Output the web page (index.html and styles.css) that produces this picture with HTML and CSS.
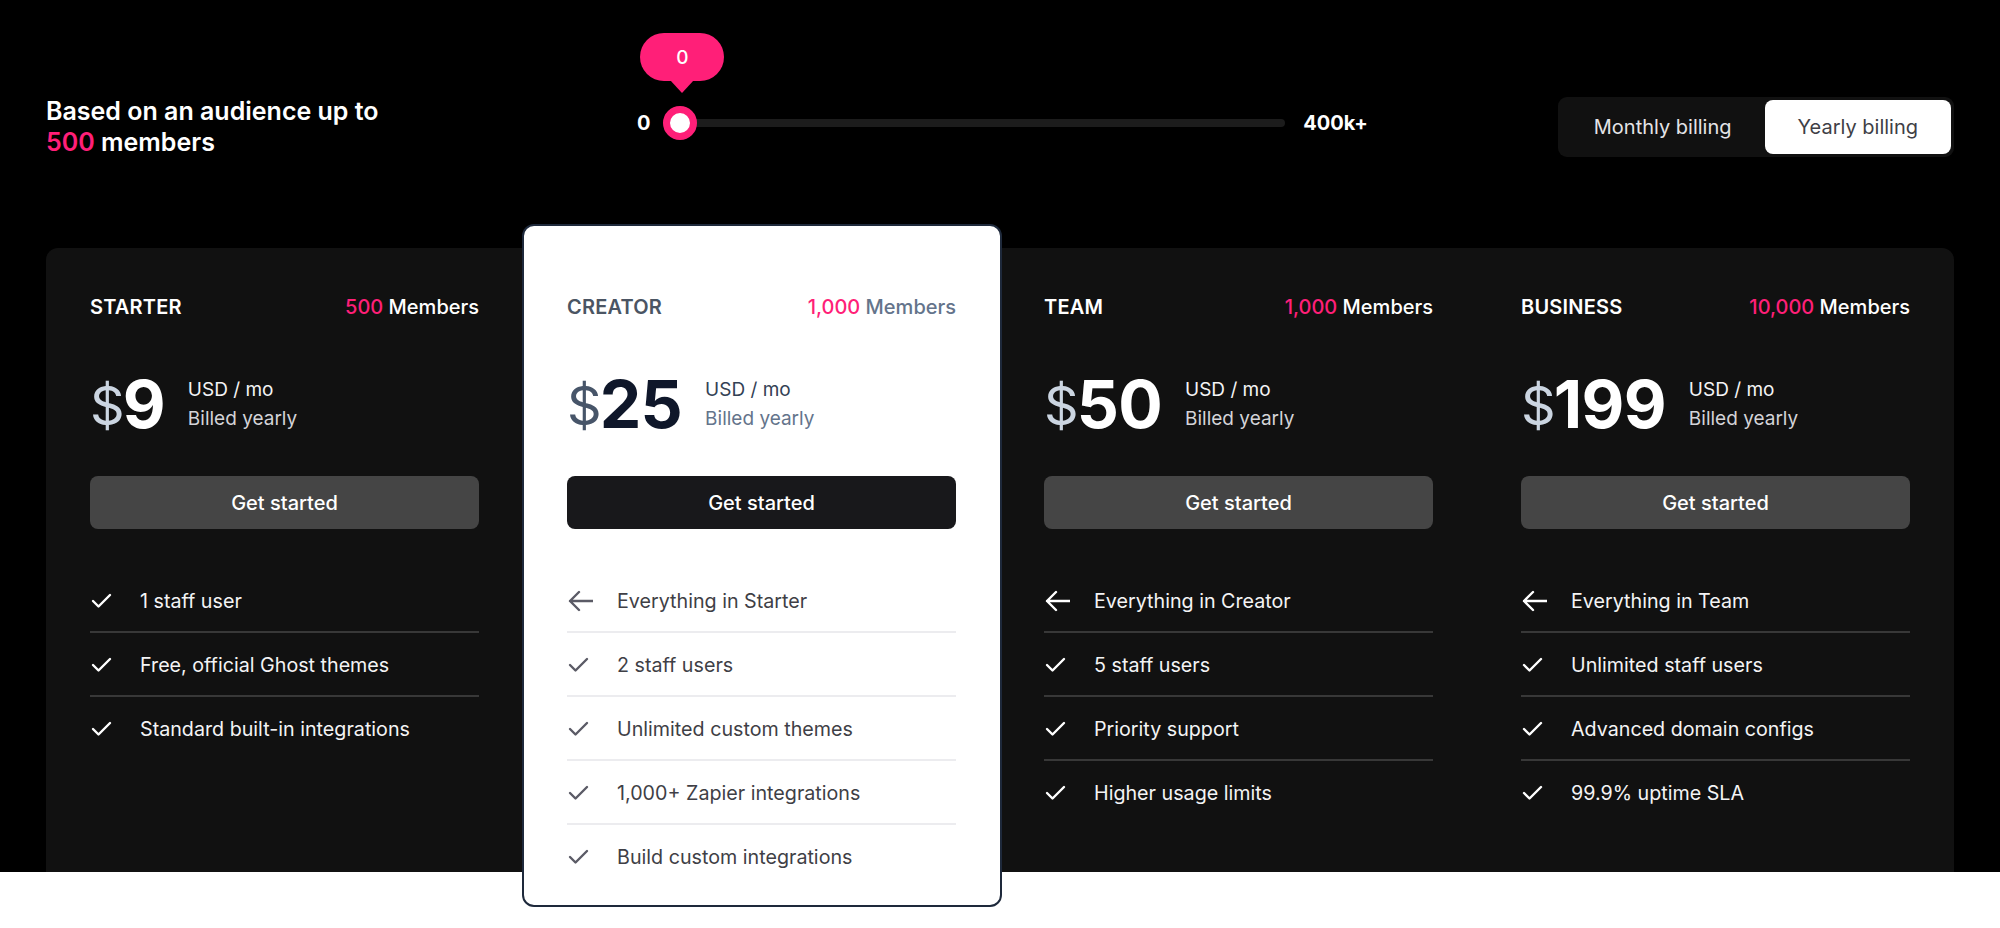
FILE: index.html
```html
<!DOCTYPE html>
<html lang="en">
<head>
<meta charset="utf-8">
<title>Pricing</title>
<link rel="stylesheet" href="styles.css">
</head>
<body>
<section class="pricing">
  <div class="topbar">
    <h2 class="audience">Based on an audience up to<br><span class="pink">500</span> members</h2>
    <div class="slider">
      <span class="slider-label">0</span>
      <div class="track">
        <div class="tooltip">0</div>
        <div class="handle"></div>
      </div>
      <span class="slider-label end">400k+</span>
    </div>
    <div class="billing">
      <button class="billing-opt">Monthly billing</button>
      <button class="billing-opt active">Yearly billing</button>
    </div>
  </div>

  <div class="plans">
    <div class="plan">
      <div class="plan-head"><span class="plan-name">STARTER</span><span class="plan-members"><span class="pink">500</span> Members</span></div>
      <div class="price-row">
        <div class="price"><span class="cur">$</span><span class="amount">9</span></div>
        <div class="unit"><span class="unit-top">USD / mo</span><span class="unit-sub">Billed yearly</span></div>
      </div>
      <button class="cta">Get started</button>
      <ul class="features">
        <li><span class="ficon"><svg viewBox="0 0 26 22" width="26" height="22"><polyline points="3,11 8.5,16.5 20,5" /></svg></span>1 staff user</li>
        <li><span class="ficon"><svg viewBox="0 0 26 22" width="26" height="22"><polyline points="3,11 8.5,16.5 20,5" /></svg></span>Free, official Ghost themes</li>
        <li><span class="ficon"><svg viewBox="0 0 26 22" width="26" height="22"><polyline points="3,11 8.5,16.5 20,5" /></svg></span>Standard built-in integrations</li>
      </ul>
    </div>

    <div class="plan featured">
      <div class="plan-head"><span class="plan-name">CREATOR</span><span class="plan-members"><span class="pink">1,000</span> Members</span></div>
      <div class="price-row">
        <div class="price"><span class="cur">$</span><span class="amount">25</span></div>
        <div class="unit"><span class="unit-top">USD / mo</span><span class="unit-sub">Billed yearly</span></div>
      </div>
      <button class="cta">Get started</button>
      <ul class="features">
        <li><span class="ficon"><svg viewBox="0 0 26 22" width="26" height="22"><path d="M3 11 H26 M12 2 L3 11 L12 20" /></svg></span>Everything in Starter</li>
        <li><span class="ficon"><svg viewBox="0 0 26 22" width="26" height="22"><polyline points="3,11 8.5,16.5 20,5" /></svg></span>2 staff users</li>
        <li><span class="ficon"><svg viewBox="0 0 26 22" width="26" height="22"><polyline points="3,11 8.5,16.5 20,5" /></svg></span>Unlimited custom themes</li>
        <li><span class="ficon"><svg viewBox="0 0 26 22" width="26" height="22"><polyline points="3,11 8.5,16.5 20,5" /></svg></span>1,000+ Zapier integrations</li>
        <li><span class="ficon"><svg viewBox="0 0 26 22" width="26" height="22"><polyline points="3,11 8.5,16.5 20,5" /></svg></span>Build custom integrations</li>
      </ul>
    </div>

    <div class="plan">
      <div class="plan-head"><span class="plan-name">TEAM</span><span class="plan-members"><span class="pink">1,000</span> Members</span></div>
      <div class="price-row">
        <div class="price"><span class="cur">$</span><span class="amount">50</span></div>
        <div class="unit"><span class="unit-top">USD / mo</span><span class="unit-sub">Billed yearly</span></div>
      </div>
      <button class="cta">Get started</button>
      <ul class="features">
        <li><span class="ficon"><svg viewBox="0 0 26 22" width="26" height="22"><path d="M3 11 H26 M12 2 L3 11 L12 20" /></svg></span>Everything in Creator</li>
        <li><span class="ficon"><svg viewBox="0 0 26 22" width="26" height="22"><polyline points="3,11 8.5,16.5 20,5" /></svg></span>5 staff users</li>
        <li><span class="ficon"><svg viewBox="0 0 26 22" width="26" height="22"><polyline points="3,11 8.5,16.5 20,5" /></svg></span>Priority support</li>
        <li><span class="ficon"><svg viewBox="0 0 26 22" width="26" height="22"><polyline points="3,11 8.5,16.5 20,5" /></svg></span>Higher usage limits</li>
      </ul>
    </div>

    <div class="plan">
      <div class="plan-head"><span class="plan-name">BUSINESS</span><span class="plan-members"><span class="pink">10,000</span> Members</span></div>
      <div class="price-row">
        <div class="price"><span class="cur">$</span><span class="amount">199</span></div>
        <div class="unit"><span class="unit-top">USD / mo</span><span class="unit-sub">Billed yearly</span></div>
      </div>
      <button class="cta">Get started</button>
      <ul class="features">
        <li><span class="ficon"><svg viewBox="0 0 26 22" width="26" height="22"><path d="M3 11 H26 M12 2 L3 11 L12 20" /></svg></span>Everything in Team</li>
        <li><span class="ficon"><svg viewBox="0 0 26 22" width="26" height="22"><polyline points="3,11 8.5,16.5 20,5" /></svg></span>Unlimited staff users</li>
        <li><span class="ficon"><svg viewBox="0 0 26 22" width="26" height="22"><polyline points="3,11 8.5,16.5 20,5" /></svg></span>Advanced domain configs</li>
        <li><span class="ficon"><svg viewBox="0 0 26 22" width="26" height="22"><polyline points="3,11 8.5,16.5 20,5" /></svg></span>99.9% uptime SLA</li>
      </ul>
    </div>
  </div>
</section>
</body>
</html>
```

FILE: styles.css
```css
* { box-sizing: border-box; }

html { background: #ffffff; }

body {
  margin: 0;
  padding-bottom: 58px;
  background: #ffffff;
  font-family: Inter, "Noto Sans", "Liberation Sans", sans-serif;
  color: #fff;
}

.pink { color: #ff1f78; }

.pricing {
  background: #000;
  padding: 40px 46px 0;
}

.topbar {
  height: 174px;
  display: flex;
  align-items: center;
  justify-content: space-between;
}

.audience {
  width: 401px;
  margin: 0;
  font-size: 25px;
  line-height: 31px;
  font-weight: 600;
  color: #fff;
}

.slider {
  width: 731px;
  display: flex;
  align-items: center;
  margin-bottom: 8px;
}

.slider-label {
  font-size: 20px;
  font-weight: 700;
  line-height: 24px;
  color: #fff;
}

.track {
  position: relative;
  flex: 1;
  height: 8px;
  margin: 0 18px 0 13px;
  background: #1c1c1c;
  border-radius: 4px;
}

.handle {
  position: absolute;
  left: 0;
  top: -13px;
  width: 34px;
  height: 34px;
  border-radius: 50%;
  background: #fff;
  border: 7px solid #ff1f78;
}

.tooltip {
  position: absolute;
  left: -23px;
  top: -86px;
  width: 84px;
  height: 48px;
  border-radius: 24px;
  background: #ff1f78;
  color: #fff;
  font-size: 19px;
  font-weight: 500;
  display: flex;
  align-items: center;
  justify-content: center;
}

.tooltip::after {
  content: "";
  position: absolute;
  left: 30px;
  bottom: -12px;
  border-left: 12px solid transparent;
  border-right: 12px solid transparent;
  border-top: 13px solid #ff1f78;
}

.billing {
  display: flex;
  padding: 3px;
  background: #111;
  border-radius: 9px;
}

.billing-opt {
  height: 54px;
  padding: 0 33px;
  border: 0;
  background: transparent;
  border-radius: 8px;
  font-family: inherit;
  font-size: 20px;
  color: #e4e4e7;
}

.billing-opt.active {
  background: #fff;
  color: #3f3f46;
}

.plans {
  margin-top: 34px;
  display: grid;
  grid-template-columns: repeat(4, 1fr);
  background: #111;
  border-radius: 12px 12px 0 0;
}

.plan {
  padding: 45px 44px 0;
  min-width: 0;
}

.plan.featured {
  margin: -24px -2px -35px -1px;
  padding: 67px 44px 18px 43px;
  background: #fff;
  border: 2px solid #1e293b;
  border-radius: 12px;
}

.plan-head {
  display: flex;
  justify-content: space-between;
  font-size: 20px;
  line-height: 28px;
  font-weight: 600;
}

.plan-name { letter-spacing: 0.01em; color: #fff; }
.plan-members { font-weight: 500; color: #fff; }
.featured .plan-name { color: #4b5563; }
.featured .plan-members { color: #64748b; }

.price-row {
  margin-top: 51px;
  display: flex;
  align-items: center;
  gap: 23px;
}

.price {
  display: flex;
  align-items: baseline;
  line-height: 64px;
  height: 64px;
}

.cur {
  font-size: 54px;
  font-weight: 400;
  color: #cbd5e1;
  margin-right: -2px;
  transform: translateY(-3px);
}

.amount {
  font-size: 66px;
  font-weight: 700;
  letter-spacing: -0.01em;
  color: #fff;
}

.featured .cur { color: #475569; }
.featured .amount { color: #0f172a; }

.unit {
  display: flex;
  flex-direction: column;
  font-size: 19px;
  line-height: 29px;
}

.unit-top { color: #f4f4f5; }
.unit-sub { color: #d4d4d8; }
.featured .unit-top { color: #334155; }
.featured .unit-sub { color: #64748b; }

.cta {
  display: block;
  width: 100%;
  height: 53px;
  margin-top: 40px;
  border: 0;
  border-radius: 8px;
  background: #454545;
  color: #fff;
  font-family: inherit;
  font-size: 20px;
  font-weight: 500;
}

.featured .cta { background: #18181b; }

.features {
  list-style: none;
  margin: 40px 0 0;
  padding: 0;
}

.features li {
  display: flex;
  align-items: center;
  padding: 18px 0 16px;
  border-bottom: 2px solid #383838;
  font-size: 19.7px;
  line-height: 28px;
  color: #f4f4f5;
}

.features li:last-child { border-bottom: 0; }

.featured .features li {
  color: #3f3f46;
  border-bottom-color: #ececef;
}
.featured .features li:last-child { border-bottom: 0; }

.ficon {
  width: 50px;
  flex-shrink: 0;
  display: flex;
  align-items: center;
}

.ficon svg {
  fill: none;
  stroke: #fff;
  stroke-width: 2.4;
  stroke-linecap: round;
  stroke-linejoin: round;
}

.featured .ficon svg { stroke: #5b5b66; }
```
